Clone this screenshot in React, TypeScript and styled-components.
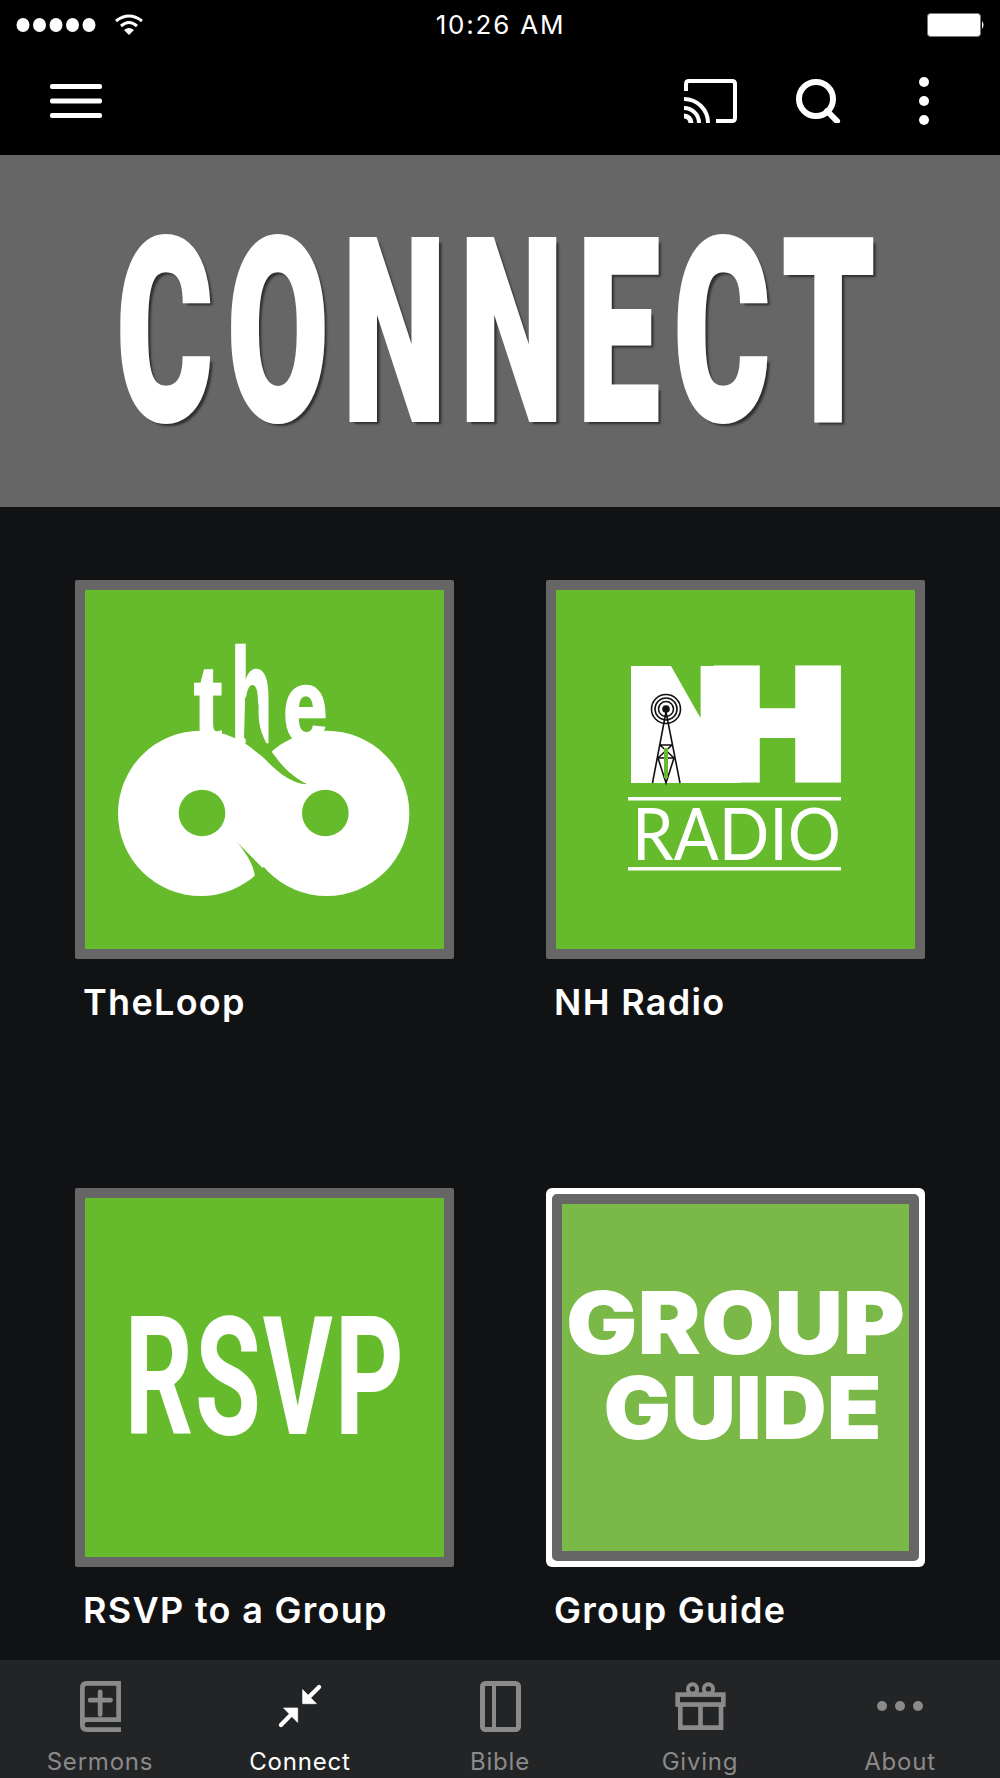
import React from "react";
import styled, { createGlobalStyle } from "styled-components";

const Global = createGlobalStyle`
  html, body { margin: 0; padding: 0; background: #111214; }
  * { box-sizing: border-box; }
  #root { width: 1000px; height: 1778px; overflow: hidden; }
`;

const Page = styled.div`
  width: 1000px;
  height: 1778px;
  display: flex;
  flex-direction: column;
  background: #111214;
  font-family: Inter, "Liberation Sans", sans-serif;
  color: #fff;
`;

const StatusBar = styled.div`
  height: 50px;
  background: #000;
  display: grid;
  grid-template-columns: 1fr auto 1fr;
  align-items: center;
  padding: 0 15px 0 16px;
`;
const StatusLeft = styled.div`
  display: flex;
  align-items: center;
  gap: 14px;
`;
const StatusTime = styled.div`
  font-size: 26px;
  letter-spacing: 1.8px;
  line-height: 50px;
`;
const StatusRight = styled.div`
  display: flex;
  justify-content: flex-end;
`;

const Toolbar = styled.div`
  height: 105px;
  background: #000;
  display: flex;
  align-items: center;
  justify-content: space-between;
  padding: 0 51px 3px 50px;
`;
const ToolbarActions = styled.div`
  display: flex;
  align-items: center;
  gap: 58px;
`;

const Banner = styled.header`
  height: 352px;
  background: #666;
  display: flex;
  align-items: center;
  justify-content: center;
  overflow: hidden;
`;
const BannerTitle = styled.h1`
  margin: 3px 0 0 6px;
  font-family: Roboto, sans-serif;
  font-weight: 900;
  font-size: 255px;
  line-height: 1;
  letter-spacing: 25px;
  color: #fff;
  white-space: nowrap;
  transform: scaleX(0.575);
  -webkit-text-stroke: 4px #fff;
  text-shadow: 6px 4px 3px rgba(0, 0, 0, 0.55);
`;

const Grid = styled.main`
  flex: 1;
  display: grid;
  grid-template-columns: 379px 379px;
  grid-auto-rows: 443px;
  column-gap: 92px;
  row-gap: 165px;
  padding: 73px 0 0 75px;
`;
const Item = styled.div`
  display: flex;
  flex-direction: column;
`;
const Tile = styled.div<{ $selected?: boolean }>`
  width: 379px;
  height: 379px;
  border-radius: 6px;
  padding: ${(p) => (p.$selected ? "6px" : "0")};
  background: ${(p) => (p.$selected ? "#fff" : "#666")};
`;
const TileInner = styled.div<{ $selected?: boolean }>`
  width: 100%;
  height: 100%;
  border: 10px solid #666;
  border-radius: ${(p) => (p.$selected ? "5px" : "2px")};
  background: ${(p) => (p.$selected ? "#7ab848" : "#66bb2d")};
  display: flex;
  flex-direction: column;
  align-items: center;
  justify-content: center;
  overflow: hidden;
`;
const Label = styled.div`
  margin: 22px 0 0 8px;
  font-weight: 600;
  font-size: 36px;
  letter-spacing: 1.3px;
  line-height: 42px;
  color: #fff;
`;
const RsvpText = styled.div`
  font-family: Roboto, sans-serif;
  font-weight: 700;
  font-size: 166px;
  line-height: 1;
  letter-spacing: 3px;
  white-space: nowrap;
  color: #fff;
  transform: scaleX(0.645);
`;
const GuideText = styled.div`
  margin-bottom: 26px;
  font-family: Inter, sans-serif;
  font-weight: 900;
  font-size: 87px;
  line-height: 85px;
  text-align: center;
  color: #fff;
  white-space: nowrap;
`;
const GuideLine = styled.div<{ $stretch: number; $shift?: number }>`
  margin-left: ${(p) => p.$shift ?? 0}px;
  transform: scaleX(${(p) => p.$stretch});
`;

const TabBar = styled.nav`
  height: 118px;
  background: #232426;
  display: grid;
  grid-template-columns: repeat(5, 1fr);
`;
const Tab = styled.div<{ $active?: boolean }>`
  display: flex;
  flex-direction: column;
  align-items: center;
  color: ${(p) => (p.$active ? "#fff" : "#8a8a8a")};
`;
const TabIconSlot = styled.div`
  height: 88px;
  width: 100%;
  display: flex;
  align-items: center;
  justify-content: center;
  padding-top: 4px;
`;
const TabLabel = styled.div`
  font-size: 24px;
  line-height: 28px;
  letter-spacing: 0.8px;
`;

const SignalIcon = () => (
  <svg width="84" height="16" viewBox="0 0 84 16" fill="#fff">
    {[7, 23.5, 40, 56.5, 73].map((cx) => (
      <ellipse key={cx} cx={cx} cy="8" rx="6.5" ry="7" />
    ))}
  </svg>
);
const WifiIcon = () => (
  <svg width="30" height="22" viewBox="0 0 30 22" fill="none" stroke="#fff" strokeWidth="3">
    <path d="M2 7 Q15 -3 28 7" />
    <path d="M7 12 Q15 5 23 12" />
    <path d="M15 21 L10 16 Q15 12 20 16 Z" fill="#fff" stroke="none" />
  </svg>
);
const BatteryIcon = () => (
  <svg width="58" height="24" viewBox="0 0 58 24">
    <rect x="0.5" y="0.5" width="53" height="23" rx="3" fill="#fff" stroke="#777" />
    <path d="M55 8 Q58 12 55 16 Z" fill="#fff" />
  </svg>
);
const MenuIcon = () => (
  <svg width="52" height="34" viewBox="0 0 52 34" fill="#fff">
    <rect x="0" y="0" width="52" height="5" rx="2" />
    <rect x="0" y="14.5" width="52" height="5" rx="2" />
    <rect x="0" y="29" width="52" height="5" rx="2" />
  </svg>
);
const CastIcon = () => (
  <svg width="54" height="44" viewBox="0 0 54 44" fill="none" stroke="#fff" strokeWidth="4">
    <path d="M2 12 V5 Q2 2 5 2 H48 Q51 2 51 5 V39 Q51 42 48 42 H32" />
    <path d="M0 20 A24 24 0 0 1 24 44" />
    <path d="M0 29 A15 15 0 0 1 15 44" />
    <path d="M0 37 A7 7 0 0 1 7 44" strokeWidth="5" />
  </svg>
);
const SearchIcon = () => (
  <svg width="45" height="44" viewBox="0 0 45 44" fill="none" stroke="#fff" strokeWidth="6">
    <circle cx="20" cy="20" r="17" />
    <path d="M31 32 L41 42" strokeLinecap="round" />
  </svg>
);
const MoreIcon = () => (
  <svg width="50" height="50" viewBox="0 0 50 50" fill="#fff">
    <circle cx="25" cy="6" r="5" />
    <circle cx="25" cy="25" r="5" />
    <circle cx="25" cy="44" r="5" />
  </svg>
);

const TheLoopLogo = () => (
  <svg width="359" height="359" viewBox="45 45 1077 1077">
    <text fill="#fff" stroke="#fff" strokeWidth="8" fontFamily="'Liberation Sans', sans-serif" fontWeight="700">
      <tspan x="372" y="500" fontSize="330" textLength="84" lengthAdjust="spacingAndGlyphs">t</tspan>
      <tspan x="484" y="500" fontSize="400" textLength="122" lengthAdjust="spacingAndGlyphs">h</tspan>
      <tspan x="640" y="500" fontSize="310" textLength="132" lengthAdjust="spacingAndGlyphs">e</tspan>
    </text>
    <g fill="#fff">
      <circle cx="392" cy="715" r="248" />
      <circle cx="770" cy="715" r="248" />
      <path d="M500 490 L712 640 L660 860 L600 880 L540 860 L440 700 Z" />
    </g>
    <g fill="#66bb2d">
      <circle cx="396" cy="714" r="70" />
      <circle cx="766" cy="714" r="70" />
      <path d="M500 800 C525 830 550 865 555 905 L530 935 L560 975 L615 975 L604 906 Z" />
      <path d="M525 380 C520 350 568 350 566 400 C562 470 590 510 620 550 C645 585 680 612 712 628 C650 625 600 570 555 520 C545 508 530 495 522 488 Z" />
      <path d="M606 520 L612 480 L645 478 L645 494 C630 500 618 510 606 520 Z" />
    </g>
  </svg>
);

const RadioLogo = () => (
  <svg width="359" height="359" viewBox="556 590 359 359">
    <path d="M631 666 H671 L714 742 V783 H631 Z" fill="#fff" />
    <text
      y="778"
      fontFamily="Roboto, sans-serif"
      fontWeight="900"
      fontSize="150"
      fill="#fff"
      stroke="#fff"
      strokeWidth="10"
    >
      <tspan x="628" textLength="115" lengthAdjust="spacingAndGlyphs">N</tspan>
      <tspan x="710" textLength="135" lengthAdjust="spacingAndGlyphs">H</tspan>
    </text>
    <g fill="none" stroke="#111" strokeWidth="1.6">
      <circle cx="666" cy="709" r="14.5" />
      <circle cx="666" cy="709" r="11" />
      <circle cx="666" cy="709" r="7.5" />
      <path d="M666 712 L652.5 783 M666 712 L680 783 M660 745 L672 745 M658 758 L674 758 M658 758 L666 783 L674 758 M660 745 L674 758 M672 745 L658 758" />
    </g>
    <path d="M664 748 H668 V778 H664 Z" fill="#66bb2d" />
    <circle cx="666" cy="709" r="3.8" fill="#111" />
    <rect x="628" y="797" width="213" height="3.5" fill="#fff" />
    <rect x="628" y="867" width="213" height="3.5" fill="#fff" />
    <text
      x="632"
      y="860"
      fontFamily="Lato, sans-serif"
      fontWeight="400"
      fontSize="71"
      fill="#fff"
      textLength="209"
      lengthAdjust="spacingAndGlyphs"
    >
      RADIO
    </text>
  </svg>
);

const SermonsIcon = () => (
  <svg width="41" height="51" viewBox="242 90 122 152" fill="none" stroke="currentColor" strokeWidth="14">
    <path d="M364 97 H262 Q249 97 249 110 V222 Q249 235 262 235 H364" />
    <path d="M357 97 V205 H262 Q249 205 249 218" />
    <path d="M302 122 V190 M272 147 H333" strokeLinecap="round" />
  </svg>
);
const ConnectIcon = () => (
  <svg width="46" height="46" viewBox="830 92 140 140" fill="currentColor" stroke="currentColor">
    <path d="M908 112 L908 155 L950 155 Z" strokeWidth="2" strokeLinejoin="round" />
    <path d="M922 140 L958 104" strokeWidth="13" strokeLinecap="round" fill="none" />
    <path d="M893 168 L893 212 L850 168 Z" strokeWidth="2" strokeLinejoin="round" />
    <path d="M878 183 L842 220" strokeWidth="13" strokeLinecap="round" fill="none" />
  </svg>
);
const BibleIcon = () => (
  <svg width="41" height="51" viewBox="0 0 41 51" fill="none" stroke="currentColor" strokeWidth="5">
    <rect x="2.5" y="2.5" width="36" height="46" rx="3" />
    <path d="M14 3 V48" strokeWidth="4" />
  </svg>
);
const GivingIcon = () => (
  <svg width="51" height="48" viewBox="520 90 152 145" fill="none" stroke="currentColor" strokeWidth="14">
    <rect x="527" y="128" width="138" height="30" />
    <path d="M535 160 V228 H658 V160 M596 160 V228" strokeWidth="14" />
    <circle cx="572" cy="111" r="14" strokeWidth="12" />
    <circle cx="620" cy="111" r="14" strokeWidth="12" />
  </svg>
);
const AboutIcon = () => (
  <svg width="46" height="12" viewBox="0 0 46 12" fill="currentColor">
    <circle cx="5" cy="6" r="5" />
    <circle cx="23" cy="6" r="5" />
    <circle cx="41" cy="6" r="5" />
  </svg>
);

const tabs = [
  { label: "Sermons", icon: <SermonsIcon /> },
  { label: "Connect", icon: <ConnectIcon />, active: true },
  { label: "Bible", icon: <BibleIcon /> },
  { label: "Giving", icon: <GivingIcon /> },
  { label: "About", icon: <AboutIcon /> },
];

export default function App() {
  return (
    <Page>
      <Global />
      <StatusBar>
        <StatusLeft>
          <SignalIcon />
          <WifiIcon />
        </StatusLeft>
        <StatusTime>10:26 AM</StatusTime>
        <StatusRight>
          <BatteryIcon />
        </StatusRight>
      </StatusBar>
      <Toolbar>
        <MenuIcon />
        <ToolbarActions>
          <CastIcon />
          <SearchIcon />
          <MoreIcon />
        </ToolbarActions>
      </Toolbar>
      <Banner>
        <BannerTitle>CONNECT</BannerTitle>
      </Banner>
      <Grid>
        <Item>
          <Tile>
            <TileInner>
              <TheLoopLogo />
            </TileInner>
          </Tile>
          <Label>TheLoop</Label>
        </Item>
        <Item>
          <Tile>
            <TileInner>
              <RadioLogo />
            </TileInner>
          </Tile>
          <Label>NH Radio</Label>
        </Item>
        <Item>
          <Tile>
            <TileInner>
              <RsvpText>RSVP</RsvpText>
            </TileInner>
          </Tile>
          <Label>RSVP to a Group</Label>
        </Item>
        <Item>
          <Tile $selected>
            <TileInner $selected>
              <GuideText>
                <GuideLine $stretch={1.09}>GROUP</GuideLine>
                <GuideLine $stretch={1.03} $shift={14}>GUIDE</GuideLine>
              </GuideText>
            </TileInner>
          </Tile>
          <Label>Group Guide</Label>
        </Item>
      </Grid>
      <TabBar>
        {tabs.map((t) => (
          <Tab key={t.label} $active={t.active}>
            <TabIconSlot>{t.icon}</TabIconSlot>
            <TabLabel>{t.label}</TabLabel>
          </Tab>
        ))}
      </TabBar>
    </Page>
  );
}
